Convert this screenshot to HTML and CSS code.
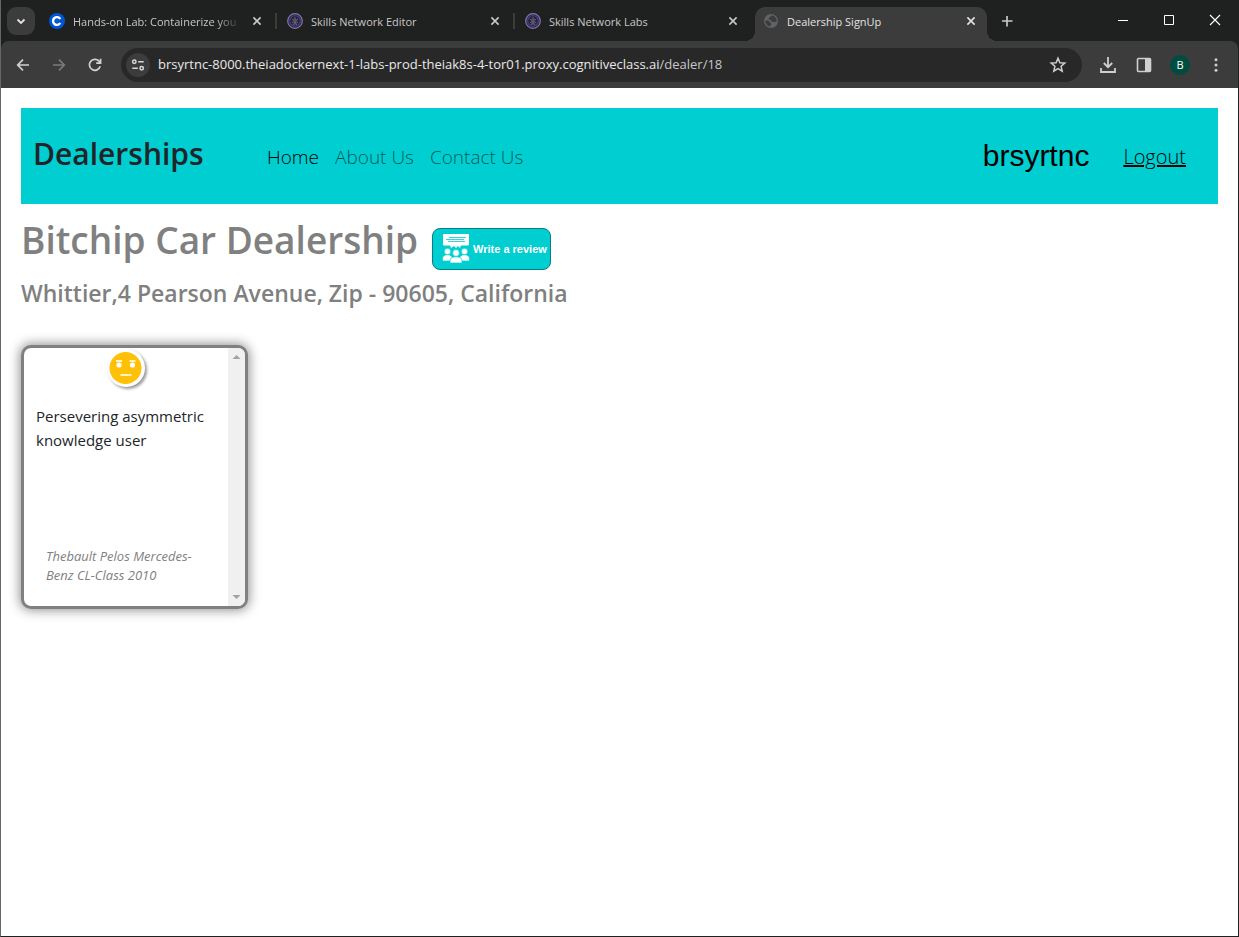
FILE: index.html
```
<!DOCTYPE html>
<html lang="en">
<head>
<meta charset="utf-8">
<title>Dealership SignUp</title>
<link rel="stylesheet" href="styles.css">
</head>
<body>
<svg class="defs" aria-hidden="true">
  <symbol id="close" viewBox="0 0 16 16"><path d="M4.4 4.4l7.2 7.2M11.6 4.4l-7.2 7.2" stroke="currentColor" stroke-width="1.6"/></symbol>
  <symbol id="skills" viewBox="0 0 16 16">
    <circle cx="8" cy="8" r="7.3" fill="#252331" stroke="#8378ad" stroke-width="1.2"/>
    <circle cx="8" cy="8" r="5.4" fill="none" stroke="#493b83" stroke-width="1.4"/>
    <path d="M8 4v8M4.8 6.2l6.4 3.6M4.8 9.8l6.4-3.6M6 12l2-3 2 3" stroke="#696389" stroke-width="1" fill="none"/>
    <circle cx="8" cy="7" r="1.8" fill="#555064"/>
  </symbol>
</svg>
<div class="window">
  <header class="tabstrip">
    <button class="tab-search" aria-label="Search tabs"><svg width="16" height="16" viewBox="0 0 16 16"><path d="M4.5 6.5L8 10l3.5-3.5" fill="none" stroke="#e3e3e3" stroke-width="1.8"/></svg></button>
    <nav class="tabs" aria-label="Tabs">
      <div class="tab">
        <svg class="favicon" viewBox="0 0 16 16"><circle cx="8" cy="8" r="8" fill="#0056d2"/><path d="M11.3 6A3.9 3.9 0 1 0 11.3 10" fill="none" stroke="#fff" stroke-width="2.4"/></svg>
        <span class="tab-title faded">Hands-on Lab: Containerize you</span>
        <button class="tab-close" aria-label="Close tab"><svg width="16" height="16"><use href="#close"/></svg></button>
      </div>
      <div class="tab divided">
        <svg class="favicon"><use href="#skills"/></svg>
        <span class="tab-title">Skills Network Editor</span>
        <button class="tab-close" aria-label="Close tab"><svg width="16" height="16"><use href="#close"/></svg></button>
      </div>
      <div class="tab divided">
        <svg class="favicon"><use href="#skills"/></svg>
        <span class="tab-title">Skills Network Labs</span>
        <button class="tab-close" aria-label="Close tab"><svg width="16" height="16"><use href="#close"/></svg></button>
      </div>
      <div class="tab active">
        <svg class="favicon" viewBox="0 0 16 16"><circle cx="8" cy="8" r="7" fill="#5f6368"/><path d="M8.500 2.500C7 2.700 7.400 4.500 6 5c-1 .4-.4 1.800.6 1.800 1.400 0 1.700.3 1.900 1.200.3 1.200 1.600 1 2.500.7 1-.3 1.500.6 2.700.3C14 5.500 12 2.700 8.500 2.500zM2.300 7.600c1.700-.3 3.800.1 4.200 1.200.3 1 1.700 1 1.700 2.100 0 1-1.200 1.200-1.200 2.600C4.200 13.200 2.300 10.800 2.300 7.600z" fill="#3c3c3c"/></svg>
        <span class="tab-title">Dealership SignUp</span>
        <button class="tab-close" aria-label="Close tab"><svg width="16" height="16"><use href="#close"/></svg></button>
      </div>
    </nav>
    <button class="new-tab" aria-label="New tab"><svg width="16" height="16" viewBox="0 0 16 16"><path d="M8 3v10.500M3 8h10.500" stroke="#c7c7c7" stroke-width="1.700"/></svg></button>
    <div class="window-controls">
      <button aria-label="Minimize"><svg width="12" height="12"><path d="M1 6.500h10" stroke="#fff"/></svg></button>
      <button aria-label="Maximize"><svg width="12" height="12"><path d="M1.500 1.500h9v9h-9z" fill="none" stroke="#fff"/></svg></button>
      <button aria-label="Close"><svg width="12" height="12"><path d="M1 1l10 10M11 1L1 11" stroke="#fff" stroke-width="1.100"/></svg></button>
    </div>
  </header>

  <div class="toolbar">
    <button aria-label="Back"><svg width="16" height="16" viewBox="0 0 16 16"><path d="M14 8H3M8 2.700L2.700 8 8 13.300" fill="none" stroke="#d0d0d0" stroke-width="1.700"/></svg></button>
    <button aria-label="Forward"><svg width="16" height="16" viewBox="0 0 16 16"><path d="M2 8h11M8 2.700L13.300 8 8 13.300" fill="none" stroke="#7b7b7b" stroke-width="1.700"/></svg></button>
    <button aria-label="Reload"><svg width="16" height="16" viewBox="0 0 16 16"><path d="M13.200 9.300A5.500 5.500 0 1 1 12.500 4.800L13 5.500M13.600 1.800v4.400H9.200" fill="none" stroke="#d0d0d0" stroke-width="1.700"/></svg></button>
    <div class="omnibox">
      <button class="site-info" aria-label="Site information"><svg width="16" height="16" viewBox="0 0 16 16" fill="none" stroke="#d8d8d8" stroke-width="1.500"><circle cx="4.300" cy="4.800" r="1.700"/><path d="M8.200 4.800h5.500M2.300 11.200h5.500"/><circle cx="11.700" cy="11.200" r="1.700"/></svg></button>
      <div class="url">brsyrtnc-8000.theiadockernext-1-labs-prod-theiak8s-4-tor01.proxy.cognitiveclass.ai<span class="path">/dealer/18</span></div>
      <button class="star" aria-label="Bookmark this tab"><svg width="18" height="18" viewBox="0 0 18 18"><path d="M9 2.200l1.900 4.500 4.900.4-3.700 3.200 1.100 4.800L9 12.600 4.800 15.100l1.100-4.800L2.200 7.100l4.900-.4z" fill="none" stroke="#cfcfcf" stroke-width="1.500"/></svg></button>
    </div>
    <div class="actions">
      <button aria-label="Downloads"><svg width="18" height="18" viewBox="0 0 18 18"><path d="M9 1v9.500M4.800 7L9 11.200 13.200 7M2 12v4h14v-4" fill="none" stroke="#cfcfcf" stroke-width="1.800"/></svg></button>
      <button aria-label="Side panel"><svg width="16" height="16" viewBox="0 0 16 16"><rect x="1.500" y="1.500" width="13" height="13" rx="1" fill="none" stroke="#cfcfcf" stroke-width="1.600"/><path d="M9 1.500h5.500v13H9z" fill="#cfcfcf"/></svg></button>
      <button class="profile" aria-label="Profile">B</button>
      <button aria-label="Menu"><svg width="16" height="16" viewBox="0 0 16 16" fill="#cfcfcf"><circle cx="8" cy="2.700" r="1.500"/><circle cx="8" cy="8" r="1.500"/><circle cx="8" cy="13.300" r="1.500"/></svg></button>
    </div>
  </div>

  <main class="page">
    <nav class="navbar" aria-label="Main">
      <h2 class="brand">Dealerships</h2>
      <div class="links">
        <a class="current" href="#">Home</a>
        <a href="#">About Us</a>
        <a href="#">Contact Us</a>
      </div>
      <span class="user">brsyrtnc</span>
      <a class="logout" href="#">Logout</a>
    </nav>

    <div class="title-row">
      <h1>Bitchip Car Dealership</h1>
      <a class="review-link" href="#">
        <svg width="28" height="30" viewBox="0 0 28 30">
          <rect x="1" y="0" width="26" height="11.500" rx="1" fill="#fff"/>
          <path d="M8 11h11l-1 3-2-2-2 2-2-2-3 2z" fill="#fff"/>
          <path d="M7 3.500h17M4 5.500h18M6 7.500h17" stroke="#00ced1" stroke-width=".8"/>
          <g fill="#fff" stroke="#00ced1" stroke-width=".7"><circle cx="5.500" cy="17.500" r="3.200"/><circle cx="22.500" cy="17.500" r="3.200"/><path d="M.5 27v-2.500c0-5 10-5 10 0V27zM17.500 27v-2.500c0-5 10-5 10 0V27z"/><circle cx="14" cy="19" r="3.400"/><path d="M8 29v-2.500c0-5 12-5 12 0V29z"/></g>
        </svg>
        <span>Write a review</span>
      </a>
    </div>
    <h4 class="address">Whittier,4 Pearson Avenue, Zip - 90605, California</h4>

    <article class="review-card">
      <div class="review-body">
        <svg class="mood" width="38" height="38" viewBox="0 0 38 38" role="img" aria-label="Neutral">
          <circle cx="18.500" cy="19" r="16" fill="#ffc107"/>
          <path d="M9 12h6M22.500 12h6M13.500 26h11" stroke="#fff3c4" stroke-width="1.800"/>
          <circle cx="12" cy="16" r="2.600" fill="#fff"/><circle cx="25.500" cy="16" r="2.600" fill="#fff"/>
        </svg>
        <p class="review-text">Persevering asymmetric knowledge user</p>
        <p class="reviewer">Thebault Pelos Mercedes-Benz CL-Class 2010</p>
      </div>
      <div class="scrollbar">
        <svg width="17" height="17"><path d="M4.500 11h8L8.500 7z" fill="#a3a3a3"/></svg>
        <svg width="17" height="17"><path d="M4.500 6h8l-4 4z" fill="#a3a3a3"/></svg>
      </div>
    </article>
  </main>
</div>
</body>
</html>
```
FILE: styles.css
```
* { box-sizing: border-box; }
body { margin: 0; background: #fff; color: #212529; font-family: "Open Sans", "Noto Sans", sans-serif; }
button { border: 0; padding: 0; background: none; color: inherit; font: inherit; display: flex; align-items: center; justify-content: center; flex: none; }
svg { display: block; flex: none; }
h1, h2, h4, p { margin: 0; }
.defs { position: absolute; width: 0; height: 0; }

.window { display: flex; flex-direction: column; min-height: 100vh; background: #1f2020; border: solid #1f2020; border-width: 0 1px 1px; border-left-color: #666; }

.tabstrip { display: flex; align-items: flex-end; height: 41px; padding-left: 6px; color: #c7c7c7; font-size: 11px; }
.tab-search { width: 28px; height: 28px; margin-bottom: 6px; border-radius: 9px; background: #3c3c3c; }
.tabs { display: flex; flex: 0 1 958px; min-width: 0; padding-left: 6px; }
.tab { position: relative; display: flex; flex: 1 1 0; align-items: center; min-width: 0; height: 34px; padding: 0 8px 6px; margin-right: 6px; border-radius: 10px 10px 0 0; }
.favicon { width: 16px; height: 16px; margin-right: 8px; }
.tab-title { flex: 1; overflow: hidden; white-space: nowrap; line-height: 16px; padding-top: 1px; }
.faded { -webkit-mask-image: linear-gradient(to right, #000 85%, transparent); mask-image: linear-gradient(to right, #000 85%, transparent); }
.tab-close { width: 16px; height: 16px; margin-left: 8px; }
.divided::before { content: ""; position: absolute; left: -4px; top: 6px; width: 2px; height: 16px; background: #3c3c3c; }
.active { background: #3c3c3c; color: #e3e3e3; }
.active::before, .active::after { content: ""; position: absolute; bottom: 0; width: 10px; height: 10px; }
.active::before { left: -10px; background: radial-gradient(circle at 0 0, transparent 10px, #3c3c3c 10px); }
.active::after { right: -10px; background: radial-gradient(circle at 100% 0, transparent 10px, #3c3c3c 10px); }
.new-tab { width: 28px; height: 28px; margin-bottom: 6px; }
.window-controls { display: flex; margin-left: auto; align-self: flex-start; }
.window-controls button { width: 46px; height: 40px; }

.toolbar { display: flex; align-items: center; gap: 8px; height: 47px; padding: 0 8px; background: #3c3c3c; border-radius: 8px 8px 0 0; }
.toolbar > button, .actions button { width: 28px; height: 28px; }
.omnibox { display: flex; flex: 1; align-items: center; min-width: 0; height: 34px; margin-left: 4px; padding: 0 10px 0 5px; border-radius: 17px; background: #282828; }
.site-info { width: 24px; height: 24px; border-radius: 50%; background: #3c3c3c; }
.url { flex: 1; margin-left: 8px; padding-bottom: 2px; overflow: hidden; color: #e8e8e8; font-size: 13px; white-space: nowrap; }
.path { color: #c7c7c7; }
.star { width: 28px; height: 28px; }
.actions { display: flex; gap: 8px; margin-left: 4px; }
.actions .profile { width: 20px; height: 20px; margin: 4px; border-radius: 50%; background: #004d40; color: #fff; font-size: 11px; }

.page { flex: 1; padding: 20px; background: #fff; }
.navbar { display: flex; align-items: center; height: 96px; padding: 0 32px 0 12px; background: #00ced1; }
.brand { width: 234px; padding-bottom: 4px; font-size: 30px; font-weight: 600; line-height: 38px; }
.links { display: flex; gap: 16px; }
.links a, .logout { padding-top: 2px; font-size: 19px; font-weight: 300; line-height: 26px; }
.links a { color: rgba(0, 0, 0, .6); text-decoration: none; }
.links .current { color: #000; }
.user { margin-left: auto; color: #000; font: 30px/36px "Liberation Sans", Arial, sans-serif; }
.logout { margin-left: 34px; color: #000; font-size: 20px; }

.title-row { display: flex; align-items: flex-start; gap: 14px; padding-top: 12px; color: gray; }
h1 { font-size: 37px; font-weight: 600; line-height: 48px; }
.review-link { display: flex; align-items: center; gap: 3px; width: 119px; height: 42px; margin-top: 12px; padding: 0 0 0 9px; border: 1px solid #087f86; border-radius: 8px; background: #00ced1; color: #fff; font: bold 11px/14px "Liberation Sans", Arial, sans-serif; text-decoration: none; white-space: nowrap; }
.address { margin-top: 9px; color: gray; font-size: 23px; font-weight: 600; line-height: 29px; }

.review-card { display: flex; width: 227px; height: 264px; margin-top: 37px; border: 3px solid gray; border-radius: 10px; background: #fff; box-shadow: 0 0 12px 1px rgba(0, 0, 0, .45); overflow: hidden; }
.review-body { display: flex; flex: 1; flex-direction: column; padding: 0 12px; }
.mood { width: 38px; height: 38px; margin: 1px auto 0; border-radius: 50%; box-shadow: 2px 2px 3px rgba(0, 0, 0, .4); }
.review-text { margin-top: 17px; font-size: 15px; line-height: 24px; }
.reviewer { margin: auto 10px 21px; color: gray; font-size: 13px; font-style: italic; line-height: 19px; }
.scrollbar { display: flex; flex-direction: column; justify-content: space-between; width: 17px; background: #f0f0f0; }
```
